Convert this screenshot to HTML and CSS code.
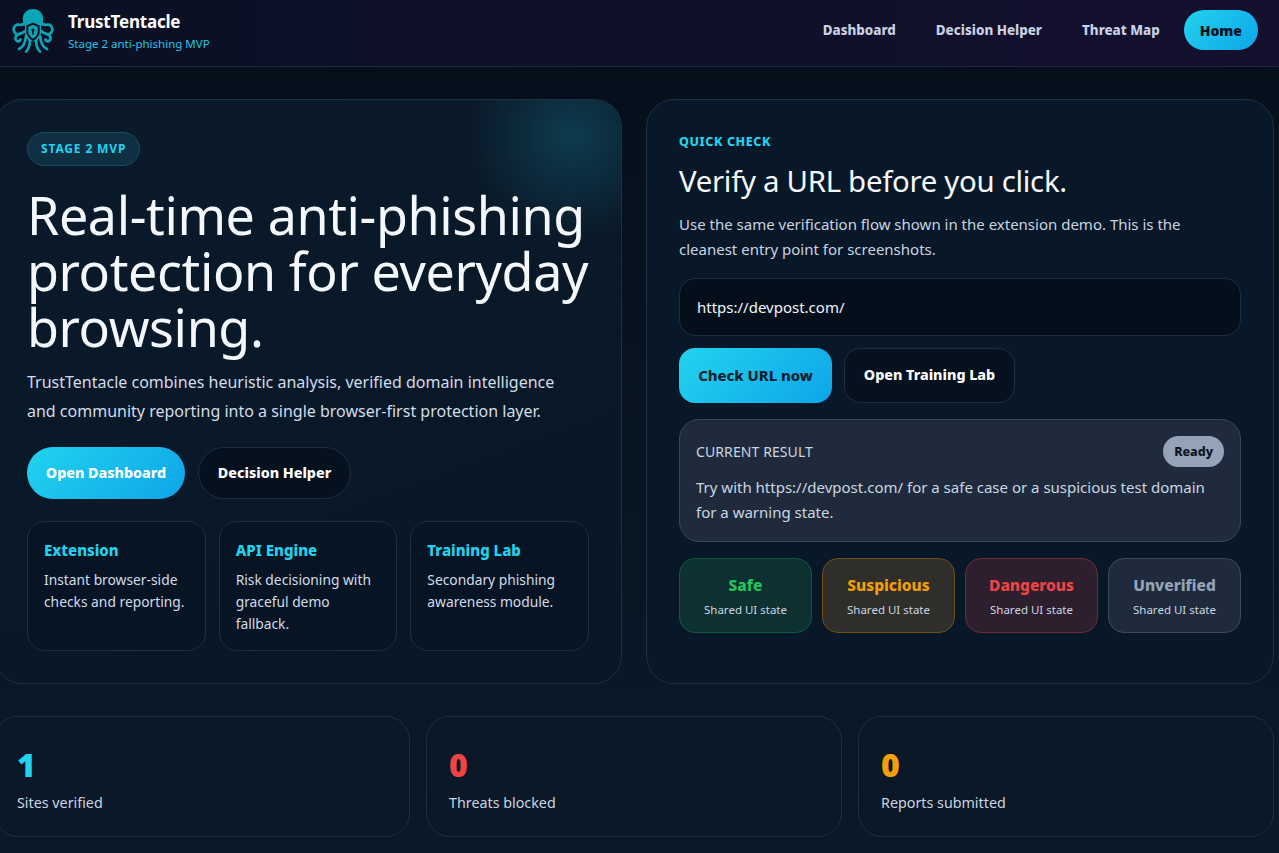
FILE: index.html
```html
<!DOCTYPE html>
<html lang="en">
<head>
<meta charset="utf-8">
<title>TrustTentacle</title>
<link rel="stylesheet" href="styles.css">
</head>
<body>
<header class="topbar">
  <div class="brand">
    <svg class="logo" viewBox="10 8 46 46" aria-hidden="true">
      <g fill="none" stroke="#0ba6b6" stroke-linecap="round" stroke-linejoin="round" stroke-width="2.700">
        <path d="M25 23C21 27 18 23 15.500 25.500C12.500 28 13 32 16.500 34"/>
        <path d="M41 23C45 27 48 23 50.500 25.500C53.500 28 53 32 49.500 34"/>
        <path d="M25 31C21 35 16.500 33 15.500 37.500C15 41.500 19.500 42.500 20.500 39.500"/>
        <path d="M41 31C45 35 49.500 33 50.500 37.500C51 41.500 46.500 42.500 45.500 39.500"/>
        <path d="M26 36C25.500 42 23.500 47 19 49"/>
        <path d="M40 36C40.500 42 42.500 47 47 49"/>
        <path d="M30 39C30 45 29 49 26 51.500"/>
        <path d="M36 39C36 45 37 49 40 51.500"/>
      </g>
      <path fill="#0ba6b6" d="M33 9C26.500 9 22.800 13.500 22.800 19C22.800 24 25.500 25 25 29C24.300 35 27 41.500 33 41.500C39 41.500 41.700 35 41 29C40.500 25 43.200 24 43.200 19C43.200 13.500 39.500 9 33 9Z"/>
      <path fill="#0a1024" d="M33 22.500L39.700 25.500V31.500C39.700 35.500 36.700 39 33 41C29.300 39 26.300 35.500 26.300 31.500V25.500Z"/>
      <path fill="#0ba6b6" d="M33 24.800L37.700 26.800V31.500C37.700 34.500 35.700 37 33 38.500C30.300 37 28.300 34.500 28.300 31.500V26.800Z"/>
      <circle cx="33" cy="30" r="1.600" fill="#0a1024"/>
      <rect x="32.200" y="30.500" width="1.600" height="4" fill="#0a1024"/>
    </svg>
    <div class="brand-text">
      <div class="brand-name">TrustTentacle</div>
      <div class="brand-sub">Stage 2 anti-phishing MVP</div>
    </div>
  </div>
  <nav class="links">
    <a class="link">Dashboard</a>
    <a class="link">Decision Helper</a>
    <a class="link">Threat Map</a>
    <a class="link link-home">Home</a>
  </nav>
</header>

<main class="page">
  <section class="columns">
    <div class="panel hero">
      <span class="pill">STAGE 2 MVP</span>
      <h1 class="headline">Real-time anti-phishing protection for everyday browsing.</h1>
      <p class="lead">TrustTentacle combines heuristic analysis, verified domain intelligence and community reporting into a single browser-first protection layer.</p>
      <div class="hero-actions">
        <a class="btn btn-primary btn-round">Open Dashboard</a>
        <a class="btn btn-ghost btn-round">Decision Helper</a>
      </div>
      <div class="mini-grid">
        <div class="mini"><h3 class="mini-title">Extension</h3><p class="mini-text">Instant browser-side checks and reporting.</p></div>
        <div class="mini"><h3 class="mini-title">API Engine</h3><p class="mini-text">Risk decisioning with graceful demo fallback.</p></div>
        <div class="mini"><h3 class="mini-title">Training Lab</h3><p class="mini-text">Secondary phishing awareness module.</p></div>
      </div>
    </div>

    <div class="panel check">
      <div class="eyebrow">QUICK CHECK</div>
      <h2 class="check-title">Verify a URL before you click.</h2>
      <p class="check-text">Use the same verification flow shown in the extension demo. This is the cleanest entry point for screenshots.</p>
      <input class="url" type="text" value="https://devpost.com/">
      <div class="check-actions">
        <a class="btn btn-primary btn-square">Check URL now</a>
        <a class="btn btn-ghost btn-square">Open Training Lab</a>
      </div>
      <div class="result">
        <div class="result-head">
          <span class="result-label">CURRENT RESULT</span>
          <span class="ready">Ready</span>
        </div>
        <p class="result-text">Try with https://devpost.com/ for a safe case or a suspicious test domain for a warning state.</p>
      </div>
      <div class="states">
        <div class="state state-safe"><div class="state-name">Safe</div><div class="state-sub">Shared UI state</div></div>
        <div class="state state-sus"><div class="state-name">Suspicious</div><div class="state-sub">Shared UI state</div></div>
        <div class="state state-dan"><div class="state-name">Dangerous</div><div class="state-sub">Shared UI state</div></div>
        <div class="state state-unv"><div class="state-name">Unverified</div><div class="state-sub">Shared UI state</div></div>
      </div>
    </div>
  </section>

  <section class="stats">
    <div class="stat"><div class="stat-num num-cyan">1</div><div class="stat-label">Sites verified</div></div>
    <div class="stat"><div class="stat-num num-red">0</div><div class="stat-label">Threats blocked</div></div>
    <div class="stat"><div class="stat-num num-amber">0</div><div class="stat-label">Reports submitted</div></div>
  </section>
</main>
</body>
</html>
```
FILE: styles.css
```css
* { box-sizing: border-box; }
html, body { height: 100%; }
body {
  margin: 0;
  overflow: hidden;
  font-family: "Noto Sans", "Open Sans", sans-serif;
  color: #fff;
  background: linear-gradient(180deg, #050f1a 0%, #0a1929 100%);
}
.topbar {
  height: 67px;
  display: flex;
  align-items: flex-start;
  justify-content: space-between;
  padding: 8px 21px 0 10px;
  background: linear-gradient(90deg, #0a1024 0%, #14102e 100%);
  border-bottom: 1px solid #1c2a42;
}
.brand { display: flex; align-items: flex-start; gap: 12px; }
.logo { width: 46px; height: 46px; display: block; }
.brand-name { margin-top: 3px; font-size: 17px; font-weight: 700; line-height: 22px; letter-spacing: -0.2px; }
.brand-sub { font-size: 11.500px; line-height: 16px; color: #22c4e4; margin-top: 3px; }
.links { display: flex; gap: 8px; align-items: center; margin-top: 2px; }
.link {
  padding: 0 16px;
  height: 40px;
  display: flex;
  align-items: center;
  font-size: 13.400px;
  font-weight: 800;
  color: #c8d2e4;
  border-radius: 20px;
}
.link-home {
  background: linear-gradient(135deg, #22d3ee, #0ea5e9);
  color: #05121f;
  font-size: 14px;
  font-weight: 900;
}

.page { width: 1280px; margin-left: -6px; padding-top: 32px; }
.columns { display: grid; grid-template-columns: 1fr 1fr; gap: 24px; }
.panel {
  border-radius: 28px;
  border: 1px solid #1a3044;
  padding: 32px;
  height: 585px;
  background: #081828;
}
.hero {
  background:
    radial-gradient(circle at 577px 36px, rgba(20, 120, 145, .36) 0, rgba(20, 120, 145, 0) 105px),
    linear-gradient(160deg, #0b1a2a, #081726);
}
.pill {
  display: inline-flex;
  align-items: center;
  height: 34px;
  padding: 0 13px 2px;
  border-radius: 17px;
  border: 1px solid #1b4a5f;
  background: #0e3042;
  color: #22d3ee;
  font-size: 12px;
  font-weight: 700;
  letter-spacing: .85px;
  vertical-align: top;
}
.headline {
  margin: 21px 0 0;
  font-size: 52px;
  line-height: 56px;
  font-weight: 400;
  color: #f4f8fc;
  letter-spacing: -.4px;
}
.lead {
  max-width: 540px;
  margin: 13px 0 0;
  font-size: 16px;
  line-height: 29px;
  color: #d3dcea;
}
.hero-actions { display: flex; gap: 13px; margin-top: 21px; }
.btn {
  display: flex;
  align-items: center;
  justify-content: center;
  font-size: 14.300px;
  font-weight: 800;
}
.btn-primary { background: linear-gradient(135deg, #22d3ee, #0ea5e9); color: #05202f; }
.btn-ghost { background: #061120; border: 1px solid #1a2e42; color: #fff; }
.btn-round { height: 52px; border-radius: 26px; padding-bottom: 2px; }
.hero-actions .btn-primary { width: 158px; color: #fff; }
.hero-actions .btn-ghost { width: 153px; }
.mini-grid { display: grid; grid-template-columns: repeat(3, 1fr); gap: 13px; margin-top: 22px; }
.mini {
  height: 130px;
  border: 1px solid #1a3044;
  border-radius: 18px;
  padding: 16px;
  background: #071423;
}
.mini-title { margin: 2px 0 0; font-size: 15px; line-height: 20px; font-weight: 800; color: #22d3ee; }
.mini-text { margin: 9px 0 0; font-size: 13.800px; line-height: 22px; color: #d3dcea; }

.eyebrow { margin-top: 1px; font-size: 12.500px; line-height: 18px; font-weight: 800; letter-spacing: .6px; color: #22d3ee; }
.check-title { margin: 10px 0 0; font-size: 29.400px; line-height: 40px; font-weight: 400; color: #f4f8fc; letter-spacing: -.3px; }
.check-text { margin: 11px 0 0; font-size: 15px; line-height: 25px; color: #c9d4e3; }
.url {
  display: block;
  width: 100%;
  height: 58px;
  margin-top: 16px;
  padding: 0 17px;
  border: 1px solid #1a2e42;
  border-radius: 16px;
  background: #050f1c;
  color: #f1f5f9;
  font: 400 15px "Noto Sans", "Open Sans", sans-serif;
}
.check-actions { display: flex; gap: 12px; margin-top: 12px; }
.btn-square { height: 55px; border-radius: 16px; padding-bottom: 2px; }
.check-actions .btn-primary { width: 153px; font-size: 14.800px; }
.check-actions .btn-ghost { width: 171px; }
.result {
  margin-top: 16px;
  height: 123px;
  padding: 16px;
  border-radius: 20px;
  border: 1px solid #37465a;
  background: #1f2b3d;
}
.result-head { display: flex; align-items: center; justify-content: space-between; }
.result-label { font-size: 14px; letter-spacing: .1px; color: #cbd5e1; }
.ready {
  height: 31px;
  padding: 0 11px;
  display: flex;
  align-items: center;
  border-radius: 16px;
  background: #94a3b8;
  color: #0b1320;
  font-size: 12.500px;
  font-weight: 800;
}
.result-text { margin: 8px 0 0; font-size: 15px; line-height: 25px; color: #cbd5e1; }
.states { display: grid; grid-template-columns: repeat(4, 1fr); gap: 10px; margin-top: 16px; }
.state {
  height: 75px;
  border-radius: 16px;
  border: 1px solid;
  text-align: center;
  padding-top: 14px;
}
.state-name { font-size: 15.500px; line-height: 24px; font-weight: 800; }
.state-sub { margin-top: 5px; font-size: 11.500px; line-height: 16px; color: #cbd5e1; }
.state-safe { background: #0d3131; border-color: #10593f; }
.state-safe .state-name { color: #22c55e; }
.state-sus { background: #2f2e2b; border-color: #6f4f14; }
.state-sus .state-name { color: #f59e0b; }
.state-dan { background: #2e1f2e; border-color: #6f2a35; }
.state-dan .state-name { color: #ef4444; }
.state-unv { background: #1f2b3d; border-color: #3c4a5e; }
.state-unv .state-name { color: #94a3b8; }

.stats { display: grid; grid-template-columns: repeat(3, 1fr); gap: 16px; margin-top: 32px; }
.stat {
  height: 121px;
  border: 1px solid #1a3044;
  border-radius: 24px;
  padding: 27px 22px 0;
  background: #0a1828;
}
.stat-num { font-size: 32px; line-height: 42px; font-weight: 900; }
.num-cyan { color: #22d3ee; }
.num-red { color: #ef4444; }
.num-amber { color: #f59e0b; }
.stat-label { margin-top: 7px; font-size: 14.300px; line-height: 20px; color: #cbd5e1; }
```
